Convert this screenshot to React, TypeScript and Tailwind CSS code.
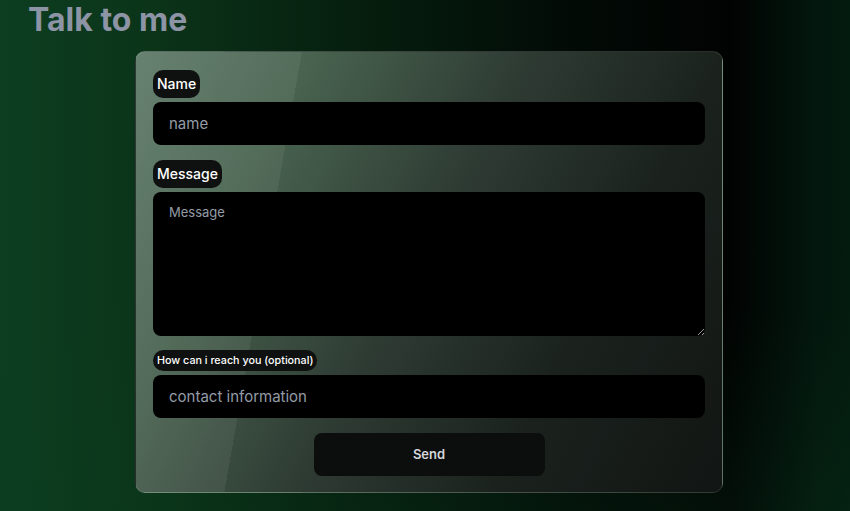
import { useState } from 'react'

export default function App() {
  const [form, setForm] = useState({ name: '', message: '', contact: '' })

  const handleSubmit = (e: React.FormEvent) => {
    e.preventDefault()
  }

  return (
    <div className="min-h-screen w-full overflow-hidden font-['Inter',sans-serif] [background:linear-gradient(180deg,rgba(0,0,0,0)_0%,rgba(0,0,0,0)_60%,rgba(10,60,30,0.22)_100%),linear-gradient(90deg,#0d3e21_0%,#0b3419_18%,#06200f_40%,#020a06_68%,#010302_86%,#020d08_91%,#03170d_96%,#031a0e_100%)]">
      <h1 className="pl-[28px] pt-[1px] text-[32px] leading-[38px] font-bold text-[#8c94a5]">Talk to me</h1>
      <div className="pl-2 pt-[12px]">
        <form
          onSubmit={handleSubmit}
          className="mx-auto w-[588px] rounded-[10px] border border-white/10 bg-[linear-gradient(100deg,rgba(255,255,255,0.07)_0%,rgba(255,255,255,0.06)_25%,rgba(255,255,255,0)_25%),linear-gradient(118deg,#5c7866_0%,#48624f_22%,#2e3b33_48%,#1b221e_72%,#111513_100%)] px-[17px] pt-[18px] pb-[16px] flex flex-col"
        >
          <label className="self-start rounded-[10px] bg-[#0f1110] px-1 py-1 text-sm leading-5 font-medium text-white">
            Name
          </label>
          <input
            type="text"
            placeholder="name"
            value={form.name}
            onChange={(e) => setForm({ ...form, name: e.target.value })}
            className="mt-1 h-[43px] w-full rounded-lg bg-black pl-4 text-[15px] text-white placeholder:text-[#939ca6] outline-none"
          />

          <label className="mt-[15px] self-start rounded-[10px] bg-[#0f1110] px-1 py-1 text-sm leading-5 font-medium text-white">
            Message
          </label>
          <textarea
            placeholder="Message"
            value={form.message}
            onChange={(e) => setForm({ ...form, message: e.target.value })}
            className="mt-1 h-[144px] w-full rounded-lg bg-black px-4 pt-[11px] text-[13px] text-white placeholder:text-[#939ca6] outline-none"
          />

          <label className="mt-[14px] self-start rounded-full bg-[#0f1110] px-1 py-[4px] text-[10.75px] leading-[13px] font-medium text-white">
            How can i reach you (optional)
          </label>
          <input
            type="text"
            placeholder="contact information"
            value={form.contact}
            onChange={(e) => setForm({ ...form, contact: e.target.value })}
            className="mt-1 h-[43px] w-full rounded-lg bg-black pl-4 text-[15px] text-white placeholder:text-[#939ca6] outline-none"
          />

          <button
            type="submit"
            className="mt-[15px] mx-auto h-[43px] w-[231px] rounded-lg bg-[#0c0e0d] text-[13px] font-semibold text-[#d3d6db]"
          >
            Send
          </button>
        </form>
      </div>
    </div>
  )
}
